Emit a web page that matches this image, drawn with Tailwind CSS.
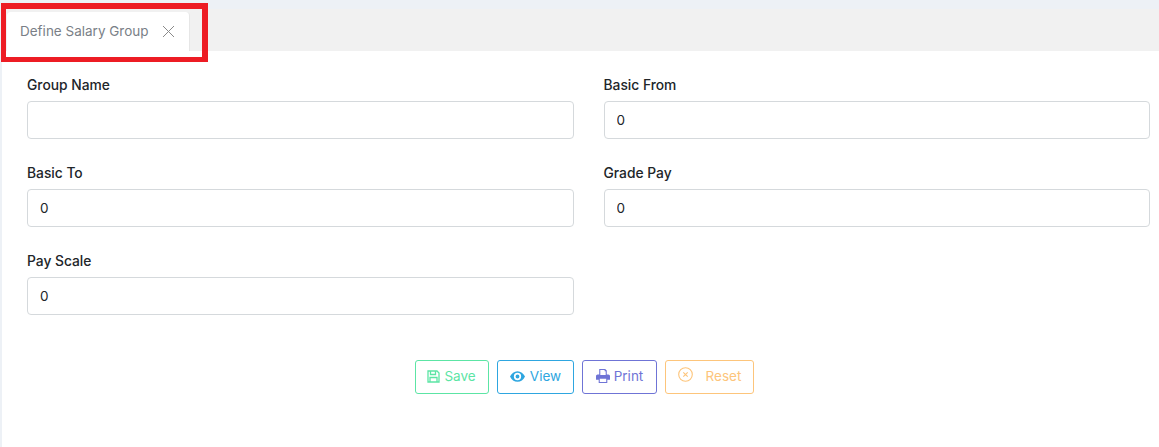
<!DOCTYPE html>
<html lang="en">
<head>
    <meta charset="UTF-8">
    <title>Define Salary Group</title>
    <script src="https://cdn.jsdelivr.net/npm/@tailwindcss/browser@4"></script>
</head>
<body class="bg-[#edf1f6] font-['Inter','Liberation_Sans',sans-serif] overflow-hidden">
    <div class="relative w-[1159px] h-[447px] pt-[9px] pl-[2px]">

        <!-- tab strip -->
        <div class="h-[42px] bg-[#f1f1f1] flex items-end pl-[5px]">
            <div class="w-[183px] h-[39px] bg-white border-r border-[#e6e6e6] rounded-t-[4px] flex items-center pl-[13px] pb-[1px] gap-[13px] text-[13.5px] text-[#7a7f87]">
                <span class="whitespace-nowrap">Define Salary Group</span>
                <svg class="w-[13px] h-[13px]" viewBox="0 0 13 13" fill="none" stroke="#8a8a8a" stroke-width="1">
                    <path d="M1 1l11 11M12 1L1 12"/>
                </svg>
            </div>
        </div>

        <!-- form -->
        <div class="bg-white h-[396px] pl-[25px] pr-[9px] pt-[25px]">
            <div class="grid grid-cols-2 gap-x-[30px] gap-y-[25px]">
                <div>
                    <label class="block h-[25px] text-[13.8px] leading-[19px] font-[550] text-[#212529]">Group Name</label>
                    <input type="text" class="block w-full h-[38px] px-[12px] text-[13.5px] text-[#212529] border border-[#d5d9dc] rounded-[4px] bg-white">
                </div>
                <div>
                    <label class="block h-[25px] text-[13.8px] leading-[19px] font-[550] text-[#212529]">Basic From</label>
                    <input type="text" value="0" class="block w-full h-[38px] px-[12px] text-[13.5px] text-[#212529] border border-[#d5d9dc] rounded-[4px] bg-white">
                </div>
                <div>
                    <label class="block h-[25px] text-[13.8px] leading-[19px] font-[550] text-[#212529]">Basic To</label>
                    <input type="text" value="0" class="block w-full h-[38px] px-[12px] text-[13.5px] text-[#212529] border border-[#d5d9dc] rounded-[4px] bg-white">
                </div>
                <div>
                    <label class="block h-[25px] text-[13.8px] leading-[19px] font-[550] text-[#212529]">Grade Pay</label>
                    <input type="text" value="0" class="block w-full h-[38px] px-[12px] text-[13.5px] text-[#212529] border border-[#d5d9dc] rounded-[4px] bg-white">
                </div>
                <div>
                    <label class="block h-[25px] text-[13.8px] leading-[19px] font-[550] text-[#212529]">Pay Scale</label>
                    <input type="text" value="0" class="block w-full h-[38px] px-[12px] text-[13.5px] text-[#212529] border border-[#d5d9dc] rounded-[4px] bg-white">
                </div>
            </div>

            <!-- actions -->
            <div class="flex justify-center gap-[8px] mt-[45px] text-[13.5px] leading-[18px] pr-[8px]">
                <button class="flex items-center justify-center gap-[4px] w-[74px] h-[34px] pb-[2px] pr-[1px] border border-[#5ce5a5] rounded-[3px] text-[#5ce5a5]">
                    <svg class="w-[13px] h-[13px]" viewBox="0 0 13 13" fill="none" stroke="currentColor" stroke-width="1.3">
                        <path d="M1 1h9l2 2v9H1z"/><path d="M3.500 1v3.500h5V1M3 12V7.500h7V12"/>
                    </svg>
                    Save
                </button>
                <button class="flex items-center justify-center gap-[5px] w-[77px] h-[34px] pb-[2px] border border-[#2ea6e0] rounded-[3px] text-[#2ea6e0]">
                    <svg class="w-[15px] h-[11px]" viewBox="0 0 14 10" fill="currentColor">
                        <path fill-rule="evenodd" d="M7 0c3 0 5.600 2 7 5-1.400 3-4 5-7 5S1.400 8 0 5c1.400-3 4-5 7-5zm0 1.600a3.400 3.400 0 100 6.800 3.400 3.400 0 000-6.800zM7 3.200a1.800 1.800 0 110 3.600 1.800 1.800 0 010-3.600z"/>
                    </svg>
                    View
                </button>
                <button class="flex items-center justify-center gap-[4px] w-[75px] h-[34px] pb-[2px] border border-[#6f74d6] rounded-[3px] text-[#6f74d6]">
                    <svg class="w-[14px] h-[14px]" viewBox="0 0 13 13" fill="currentColor">
                        <path fill-rule="evenodd" d="M3 0h5.500L10 1.500V5h1.500c.8 0 1.500.7 1.500 1.500V10h-2.500v3h-8v-3H0V6.500C0 5.700.7 5 1.500 5H3zm1 1v4.500h5V2H8V1zM3.500 9v3h6V9z"/>
                    </svg>
                    Print
                </button>
                <button class="flex items-center justify-center gap-[13px] w-[89px] h-[34px] pb-[2px] border border-[#fdc57b] rounded-[3px] text-[#fdc57b]">
                    <svg class="w-[15px] h-[15px] -mt-[3px]" viewBox="0 0 15 15" fill="none" stroke="currentColor" stroke-width="1.1">
                        <circle cx="7.500" cy="7.500" r="6.800"/><path d="M5.300 5.300l4.400 4.400M9.700 5.300l-4.400 4.400"/>
                    </svg>
                    Reset
                </button>
            </div>
        </div>

        <!-- red annotation box around the tab -->
        <div class="absolute left-[1px] top-[3px] w-[207px] h-[59px] border-[5px] border-t-[6px] border-r-[6px] border-[#ed1c24]"></div>
    </div>
</body>
</html>
